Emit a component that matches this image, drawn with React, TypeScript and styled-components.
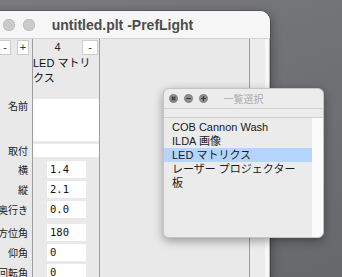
import React from "react"
import styled, {createGlobalStyle} from "styled-components"

const GlobalStyle = createGlobalStyle`
  html, body, #root {
    margin: 0;
    width: 342px;
    height: 277px;
    overflow: hidden;
  }
  body {
    font-family: "Liberation Sans", "Noto Sans CJK JP", sans-serif;
  }
`

const ui = `"Liberation Sans", "Noto Sans CJK JP", sans-serif`
const lineColor = "#9d9d9d"

const Desktop = styled.div`
  position: relative;
  width: 342px;
  height: 277px;
  overflow: hidden;
  background: linear-gradient(160deg, #797a7e 0%, #6e6f73 55%, #67686c 100%);
`

/* main document window */

const Window = styled.div`
  position: absolute;
  left: -25px;
  top: 11px;
  width: 295px;
  height: 290px;
  display: flex;
  flex-direction: column;
  border-radius: 10px 10px 0 0;
  background: #e9e9e9;
  overflow: hidden;
  box-shadow: 0 0 0 0.5px rgba(0, 0, 0, 0.35), 2px 2px 10px rgba(0, 0, 0, 0.3);
`

const TitleBar = styled.div`
  height: 27px;
  flex: none;
  display: grid;
  grid-template-columns: 1fr auto 1fr;
  align-items: center;
  padding: 0 8px;
  background: #f6f6f6;
  border-bottom: 1px solid #d3d3d3;
`

const Lights = styled.div<{$gap: number}>`
  display: flex;
  gap: ${(p) => p.$gap}px;
  align-items: center;
`

const Light = styled.span`
  width: 12px;
  height: 12px;
  border-radius: 50%;
  background: #cbcbcb;
  box-shadow: inset 0 0 0 0.5px #b2b2b2;
`

const Title = styled.div`
  font: bold 14px ${ui};
  color: #4d4d4d;
  white-space: nowrap;
`

const Body = styled.div`
  flex: 1;
  display: flex;
`

const Sheet = styled.div`
  display: grid;
  grid-template-columns: 58px 67px;
  grid-auto-rows: auto;
  align-content: start;
`

const Row = styled.div`
  display: contents;
`

const Cell = styled.div<{$pt?: number; $pb?: number; $h?: number; $white?: boolean}>`
  box-sizing: border-box;
  border-right: 1px solid ${lineColor};
  padding-top: ${(p) => p.$pt ?? 0}px;
  padding-bottom: ${(p) => p.$pb ?? 0}px;
  height: ${(p) => (p.$h ? `${p.$h}px` : "auto")};
  background: ${(p) => (p.$white ? "#ffffff" : "transparent")};
`

const LabelCell = styled(Cell)`
  display: flex;
  justify-content: flex-end;
  padding-right: 4px;
  font: 10px "Noto Sans CJK JP", sans-serif;
  color: #222;
  white-space: nowrap;
`

const Label = styled.span<{$lh: number}>`
  line-height: ${(p) => p.$lh}px;
`

const HeadLeft = styled(Cell)`
  display: flex;
  justify-content: flex-end;
  align-items: center;
  gap: 6px;
  padding-right: 3px;
`

const HeadRight = styled(Cell)`
  display: flex;
  align-items: center;
  padding-right: 1px;
`

const SmallButton = styled.div<{$w: number}>`
  box-sizing: border-box;
  width: ${(p) => p.$w}px;
  height: 15px;
  background: #fff;
  border: 1px solid #cdcdcd;
  font: 11px/13px ${ui};
  color: #333;
  text-align: center;
`

const ColumnNo = styled.div`
  flex: 1;
  text-align: center;
  font: 11px/13px ${ui};
  color: #222;
`

const FixtureName = styled.div`
  font: 11px/15px ${ui};
  color: #111;
  word-break: break-all;
`

const ValueBox = styled.div`
  width: 39px;
  height: 17px;
  margin-left: 14px;
  padding-left: 3px;
  box-sizing: border-box;
  background: #fff;
  font: 10.5px/17px "DejaVu Sans Mono", monospace;
  color: #111;
`

const EmptyColumn = styled.div`
  width: 150px;
  box-sizing: border-box;
  border-right: 1px solid ${lineColor};
`

const Gutter = styled.div`
  width: 15px;
  background: #ececec;
`

const Track = styled.div`
  width: 4px;
  background: #f7f7f7;
  border-right: 1px solid #b8b8b8;
`

/* floating list panel */

const Panel = styled.div`
  position: absolute;
  left: 163px;
  top: 88px;
  width: 161px;
  height: 150px;
  box-sizing: border-box;
  display: flex;
  flex-direction: column;
  border-radius: 6px;
  border: 1px solid #c4c4c4;
  background: #ececec;
  overflow: hidden;
  box-shadow: 0 3px 10px rgba(0, 0, 0, 0.35);
`

const PanelTitle = styled.div`
  height: 19px;
  flex: none;
  display: grid;
  grid-template-columns: 1fr auto 1fr;
  align-items: center;
  padding: 0 5px;
  border-bottom: 1px solid #d2d2d2;
`

const PanelName = styled.div`
  font: 10px "Noto Sans CJK JP", sans-serif;
  color: #ababab;
`

const PanelStrip = styled.div`
  height: 8px;
  flex: none;
  border-bottom: 1px solid #d2d2d2;
`

const ListArea = styled.div`
  flex: 1;
  display: flex;
`

const List = styled.div`
  flex: 1;
  padding-top: 2px;
  background: #ebebeb;
`

const ListTrack = styled.div`
  width: 11px;
  background: #fbfbfb;
`

const Item = styled.div<{$selected?: boolean}>`
  height: 14px;
  padding-left: 8px;
  font: 11px/14px ${ui};
  color: #1a1a1a;
  white-space: nowrap;
  background: ${(p) => (p.$selected ? "#b4d6fe" : "transparent")};
`

function PanelLight({glyph}: {glyph: "close" | "min" | "zoom"}) {
  return (
    <svg width="9" height="9" viewBox="0 0 9 9">
      <circle cx="4.5" cy="4.5" r="4.2" fill="#8d8d8d" stroke="#707070" strokeWidth="0.5" />
      <g stroke="#353535" strokeWidth="1.1" strokeLinecap="round">
        {glyph === "close" && (
          <>
            <line x1="3" y1="3" x2="6" y2="6" />
            <line x1="6" y1="3" x2="3" y2="6" />
          </>
        )}
        {glyph !== "close" && <line x1="2.6" y1="4.5" x2="6.4" y2="4.5" />}
        {glyph === "zoom" && <line x1="4.5" y1="2.6" x2="4.5" y2="6.4" />}
      </g>
    </svg>
  )
}

const values = [
  {label: "横", value: "1.4", pt: 1},
  {label: "縦", value: "2.1", pt: 1},
  {label: "奥行き", value: "0.0", pt: 1},
  {label: "方位角", value: "180", pt: 4},
  {label: "仰角", value: "0", pt: 1},
  {label: "回転角", value: "0", pt: 1},
]

const items = ["COB Cannon Wash", "ILDA 画像", "LED マトリクス", "レーザー プロジェクター", "板"]

export default function App() {
  return (
    <Desktop>
      <GlobalStyle />
      <Window>
        <TitleBar>
          <Lights $gap={8}>
            <Light />
            <Light />
            <Light />
          </Lights>
          <Title>untitled.plt -PrefLight</Title>
          <span />
        </TitleBar>
        <Body>
          <Sheet>
            <Row>
              <HeadLeft $h={17}>
                <SmallButton $w={12}>-</SmallButton>
                <SmallButton $w={12}>+</SmallButton>
              </HeadLeft>
              <HeadRight $h={17}>
                <ColumnNo>4</ColumnNo>
                <SmallButton $w={16}>-</SmallButton>
              </HeadRight>
            </Row>
            <Row>
              <LabelCell $h={43} />
              <Cell $h={43}>
                <FixtureName>LED マトリクス</FixtureName>
              </Cell>
            </Row>
            <Row>
              <LabelCell $h={42}>
                <Label $lh={14}>名前</Label>
              </LabelCell>
              <Cell $h={42} $white />
            </Row>
            <Row>
              <LabelCell $h={3} />
              <Cell $h={3} />
            </Row>
            <Row>
              <LabelCell $h={13}>
                <Label $lh={13}>取付</Label>
              </LabelCell>
              <Cell $h={13} $white />
            </Row>
            <Row>
              <LabelCell $h={3} />
              <Cell $h={3} />
            </Row>
            {values.map((v) => (
              <Row key={v.label}>
                <LabelCell $pt={v.pt} $pb={2}>
                  <Label $lh={17}>{v.label}</Label>
                </LabelCell>
                <Cell $pt={v.pt} $pb={2}>
                  <ValueBox>{v.value}</ValueBox>
                </Cell>
              </Row>
            ))}
          </Sheet>
          <EmptyColumn />
          <Gutter />
          <Track />
        </Body>
      </Window>

      <Panel>
        <PanelTitle>
          <Lights $gap={6}>
            <PanelLight glyph="close" />
            <PanelLight glyph="min" />
            <PanelLight glyph="zoom" />
          </Lights>
          <PanelName>一覧選択</PanelName>
          <span />
        </PanelTitle>
        <PanelStrip />
        <ListArea>
          <List>
            {items.map((it, i) => (
              <Item key={it} $selected={i === 2}>
                {it}
              </Item>
            ))}
          </List>
          <ListTrack />
        </ListArea>
      </Panel>
    </Desktop>
  )
}
